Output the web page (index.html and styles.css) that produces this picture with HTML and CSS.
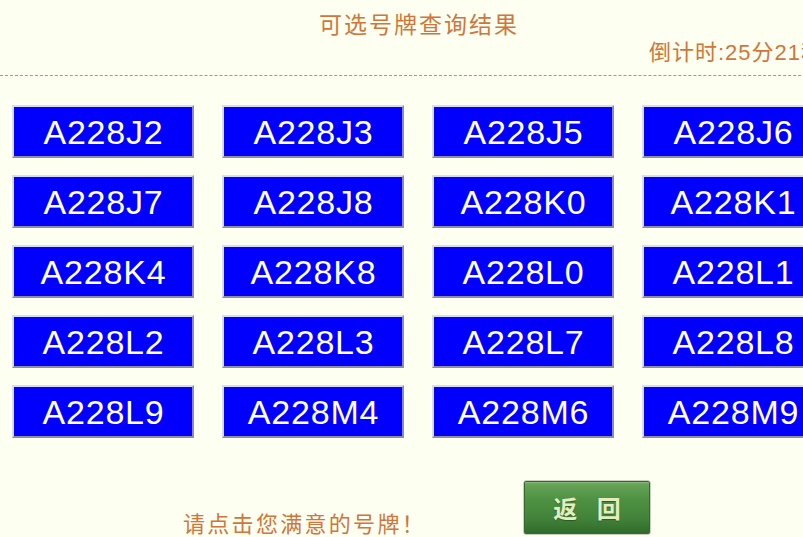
FILE: index.html
```html
<!DOCTYPE html>
<html lang="zh-CN">
<head>
<meta charset="utf-8">
<title>可选号牌查询结果</title>
<link rel="stylesheet" href="styles.css">
</head>
<body>
<div class="page">
  <div class="title">可选号牌查询结果</div>
  <div class="countdown">倒计时:25分21秒</div>
  <div class="divider"></div>
  <div class="grid">
    <div class="plate">A228J2</div>
    <div class="plate">A228J3</div>
    <div class="plate">A228J5</div>
    <div class="plate">A228J6</div>
    <div class="plate">A228J7</div>
    <div class="plate">A228J8</div>
    <div class="plate">A228K0</div>
    <div class="plate">A228K1</div>
    <div class="plate">A228K4</div>
    <div class="plate">A228K8</div>
    <div class="plate">A228L0</div>
    <div class="plate">A228L1</div>
    <div class="plate">A228L2</div>
    <div class="plate">A228L3</div>
    <div class="plate">A228L7</div>
    <div class="plate">A228L8</div>
    <div class="plate">A228L9</div>
    <div class="plate">A228M4</div>
    <div class="plate">A228M6</div>
    <div class="plate">A228M9</div>
  </div>
  <div class="footer">
    <div class="hint">请点击您满意的号牌！</div>
    <div class="back"><span class="back-text">返 回</span></div>
  </div>
</div>
</body>
</html>
```
FILE: styles.css
```css
html, body {
  margin: 0;
  padding: 0;
  background: #fdfff1;
  overflow: hidden;
}
.page {
  width: 836px;
  font-family: "Noto Sans CJK SC", "Liberation Sans", sans-serif;
  color: #d0763a;
}
.title {
  padding-top: 8px;
  height: 30px;
  line-height: 30px;
  font-size: 23px;
  letter-spacing: 2px;
  text-indent: 2px;
  text-align: center;
}
.countdown {
  margin-top: 2px;
  height: 26px;
  line-height: 26px;
  font-family: "Liberation Sans", "Noto Sans CJK SC", sans-serif;
  font-size: 22px;
  letter-spacing: 1px;
  text-align: right;
  padding-right: 12px;
  white-space: nowrap;
}
.divider {
  margin-top: 9px;
  border-top: 1px dashed #9a9a90;
}
.grid {
  display: grid;
  grid-template-columns: repeat(4, 182px);
  column-gap: 28px;
  row-gap: 17px;
  padding: 29px 12px 0;
}
.plate {
  box-sizing: border-box;
  height: 53px;
  background: #0000fc;
  border-style: solid;
  border-width: 2px;
  border-color: #dadaf2 #8e8e9e #8e8e9e #dadaf2;
  color: #ffffff;
  font-family: "Liberation Sans", Arial, sans-serif;
  font-size: 34px;
  letter-spacing: 0.8px;
  text-indent: 1px;
  line-height: 49px;
  padding-top: 1px;
  text-align: center;
}
.footer {
  display: flex;
  align-items: flex-end;
  margin-top: 42px;
  padding-left: 183px;
  gap: 97px;
}
.hint {
  font-size: 22px;
  letter-spacing: 2.3px;
  line-height: 26px;
  white-space: nowrap;
}
.back {
  box-sizing: border-box;
  width: 128px;
  height: 55px;
  border: 1px solid #c9cfc0;
  border-radius: 3px;
  background: linear-gradient(#6aa75a 0%, #4f9142 35%, #42833a 70%, #2f6a2a 100%);
  box-shadow: inset 0 0 0 1px #2f6b2b, inset 0 2px 2px rgba(255,255,255,0.25);
  display: flex;
  align-items: center;
  justify-content: center;
}
.back-text {
  font-size: 24px;
  font-weight: bold;
  letter-spacing: 7px;
  padding-left: 7px;
  white-space: pre;
  color: #e4edc0;
  text-shadow: 0 1px 1px #2a5a22;
}
```
